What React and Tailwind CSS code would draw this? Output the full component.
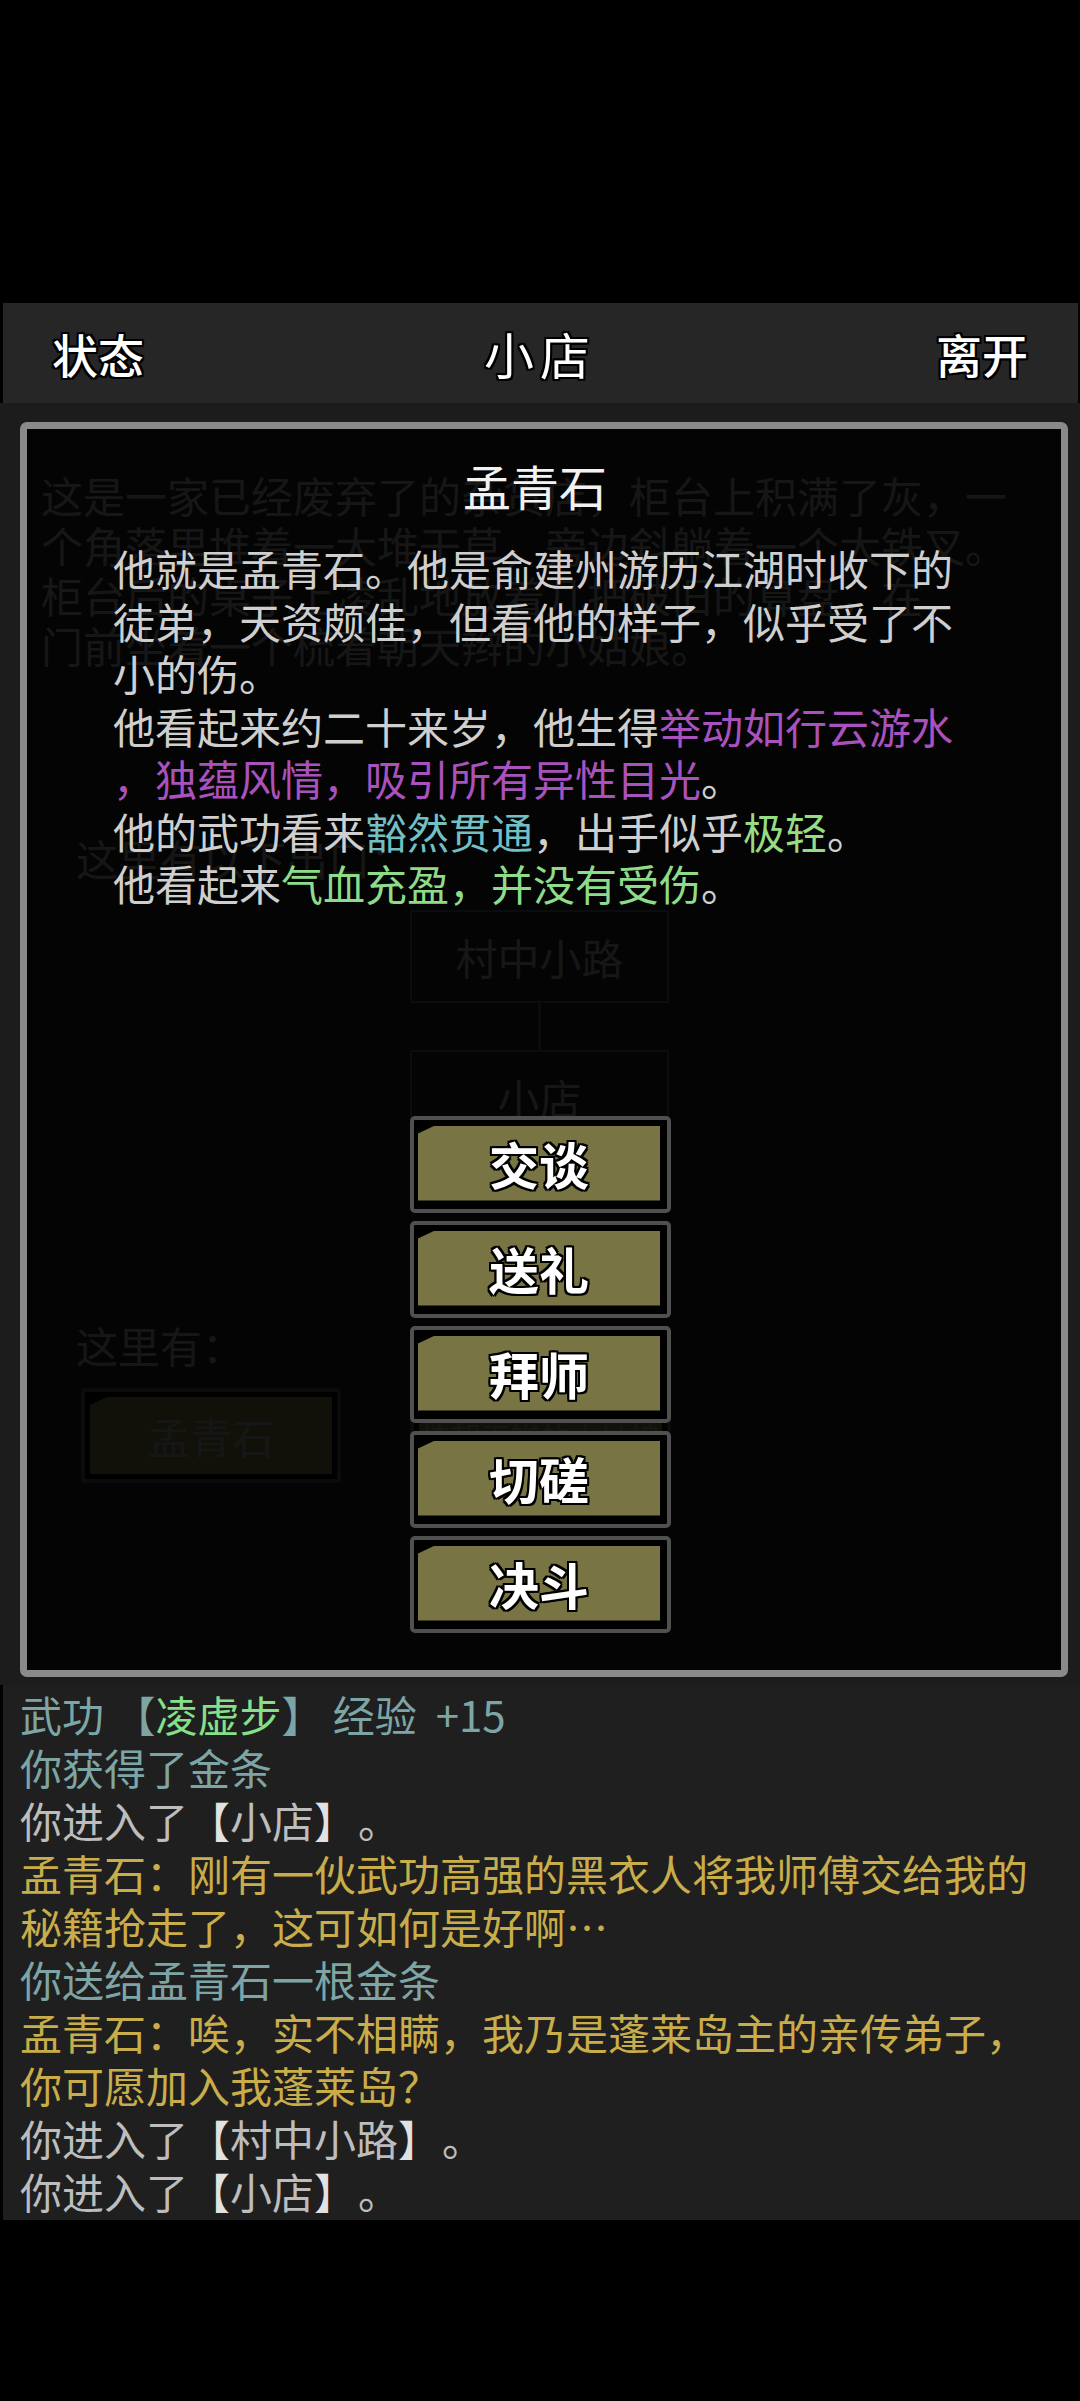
const outline =
  "[text-shadow:-2px_-2px_0_#000,2px_-2px_0_#000,-2px_2px_0_#000,2px_2px_0_#000,0_-2px_0_#000,0_2px_0_#000,-2px_0_0_#000,2px_0_0_#000]";

const actions = ["交谈", "送礼", "拜师", "切磋", "决斗"];

const sceneLines = [
  "这是一家已经废弃了的杂货店，柜台上积满了灰，一",
  "个角落里堆着一大堆干草，旁边斜躺着一个大铁叉。",
  "柜台后的桌子上凌乱地放着几把破旧的算盘，在",
  "门前坐着一个梳着朝天辫的小姑娘。",
];

const chamfer = "[clip-path:polygon(17px_0,100%_0,100%_100%,0_100%,0_8px)]";

const ActionButton = ({ label }) => (
  <div className="w-[261px] h-[97px] rounded-[5px] border-4 border-[#505050] bg-black pl-[4px] pr-[7px] pt-[6px] pb-[8px]">
    <div className={`h-full bg-[#797443] flex items-center justify-center ${chamfer}`}>
      <span className={`text-[50px] leading-none font-bold text-white ${outline}`}>
        {label}
      </span>
    </div>
  </div>
);

const Scene = () => (
  <div className="h-full flex flex-col pt-[67px] text-[42px] leading-[50px] text-[#9c9c9c]">
    {/* Room description */}
    <div className="pl-[41px]">
      {sceneLines.map((line) => (
        <div key={line} className="whitespace-nowrap">
          {line}
        </div>
      ))}
    </div>

    <div className="pl-[76px] mt-[163px]">这里有以下出口：</div>

    {/* Map */}
    <div className="ml-[410px] mt-[27px] w-[259px] flex flex-col items-center">
      <div className="w-full h-[93px] border-2 border-[#4a5a5a] flex items-center justify-center">
        村中小路
      </div>
      <div className="w-[3px] h-[47px] bg-[#4a5a5a]" />
      <div className="w-full h-[93px] border-2 border-[#4a5a5a] flex items-center justify-center">
        小店
      </div>
    </div>

    <div className="pl-[76px] mt-[177px]">这里有：</div>

    {/* People */}
    <div className="flex gap-[69px] pl-[81px] mt-[18px]">
      <div className="w-[260px] h-[95px] rounded-[4px] border-4 border-[#505050] bg-black p-[5px]">
        <div className={`h-full bg-[#797443] flex items-center justify-center ${chamfer}`}>
          孟青石
        </div>
      </div>
      <div className="w-[261px] h-[95px] rounded-[4px] border-4 border-[#505050] bg-black p-[5px]">
        <div className={`h-full bg-[#797443] flex items-center justify-center text-[30px] ${chamfer}`}>
          梳朝天辫的小姑娘
        </div>
      </div>
    </div>
  </div>
);

const Modal = () => (
  <div className="absolute top-[19px] left-[20px] w-[1048px] h-[1255px] rounded-[7px] border-[7px] border-[#8a8a8a] bg-black/[0.86] flex flex-col">
    <div className="pt-[27px] pr-[18px] text-center text-[48px] leading-[58px] text-[#f2f2f2]">
      孟青石
    </div>

    <div className="pl-[86px] mt-[28px] text-[42px] leading-[52.5px] text-[#cfcfcf] whitespace-nowrap">
      <div>他就是孟青石。他是俞建州游历江湖时收下的</div>
      <div>徒弟，天资颇佳，但看他的样子，似乎受了不</div>
      <div>小的伤。</div>
      <div>
        他看起来约二十来岁，他生得
        <span className="text-[#a952bd]">举动如行云游水</span>
      </div>
      <div>
        <span className="text-[#a952bd]">，独蕴风情，吸引所有异性目光</span>。
      </div>
      <div>
        他的武功看来<span className="text-[#72bfc4]">豁然贯通</span>
        ，出手似乎<span className="text-[#96dc84]">极轻</span>。
      </div>
      <div>
        他看起来<span className="text-[#8edc8a]">气血充盈，并没有受伤</span>。
      </div>
    </div>

    <div className="ml-[383px] mt-[206px] flex flex-col gap-[8px]">
      {actions.map((a) => (
        <ActionButton key={a} label={a} />
      ))}
    </div>
  </div>
);

const Bracketed = ({ children }) => (
  <span className="text-[#bdbdbd]">
    你进入了<span className="text-[#e2e2e2]">【</span>
    {children}
    <span className="text-[#e2e2e2]">】</span>
    <span className="inline-block ml-[2px]">。</span>
  </span>
);

const App = () => {
  const log = [
    {
      key: "exp",
      content: (
        <span className="text-[#7ea5a5]">
          武功 【<span className="text-[#86e08a]">凌虚步</span>】 经验 &nbsp;+15
        </span>
      ),
    },
    { key: "gold", content: <span className="text-[#7ea5a5]">你获得了金条</span> },
    { key: "enter1", content: <Bracketed>小店</Bracketed> },
    {
      key: "say1",
      content: (
        <span className="text-[#c9ad4a]">
          孟青石：刚有一伙武功高强的黑衣人将我师傅交给我的
        </span>
      ),
    },
    {
      key: "say1b",
      content: <span className="text-[#c9ad4a]">秘籍抢走了，这可如何是好啊…</span>,
    },
    {
      key: "gift",
      content: <span className="text-[#7ea5a5]">你送给孟青石一根金条</span>,
    },
    {
      key: "say2",
      content: (
        <span className="text-[#c9ad4a]">
          孟青石：唉，实不相瞒，我乃是蓬莱岛主的亲传弟子，
        </span>
      ),
    },
    {
      key: "say2b",
      content: <span className="text-[#c9ad4a]">你可愿加入我蓬莱岛？</span>,
    },
    { key: "enter2", content: <Bracketed>村中小路</Bracketed> },
    { key: "enter3", content: <Bracketed>小店</Bracketed> },
  ];

  return (
    <div className="w-[1080px] h-[2401px] bg-black flex flex-col font-['Noto_Sans_CJK_SC','Noto_Sans',sans-serif]">
      <div className="h-[303px] shrink-0" />

      {/* Header */}
      <div className="h-[100px] shrink-0 ml-[3px] mr-[2px] bg-[#262626] flex items-center justify-between pl-[49px] pr-[50px] text-[46px] text-white">
        <span className={`font-medium ${outline}`}>状态</span>
        <span className={`text-[50px] tracking-[6px] ${outline}`}>小店</span>
        <span className={`font-medium ${outline}`}>离开</span>
      </div>

      {/* Scene + modal overlay */}
      <div className="relative h-[1282px] shrink-0 bg-[#1c1c1c] overflow-hidden">
        <Scene />
        <Modal />
      </div>

      {/* Message log */}
      <div className="h-[535px] shrink-0 ml-[3px] bg-[#1f1f1f] pl-[17px] pt-[2px] text-[42px] leading-[53px] whitespace-nowrap">
        {log.map((l) => (
          <div key={l.key}>{l.content}</div>
        ))}
      </div>
    </div>
  );
};

export default App;
